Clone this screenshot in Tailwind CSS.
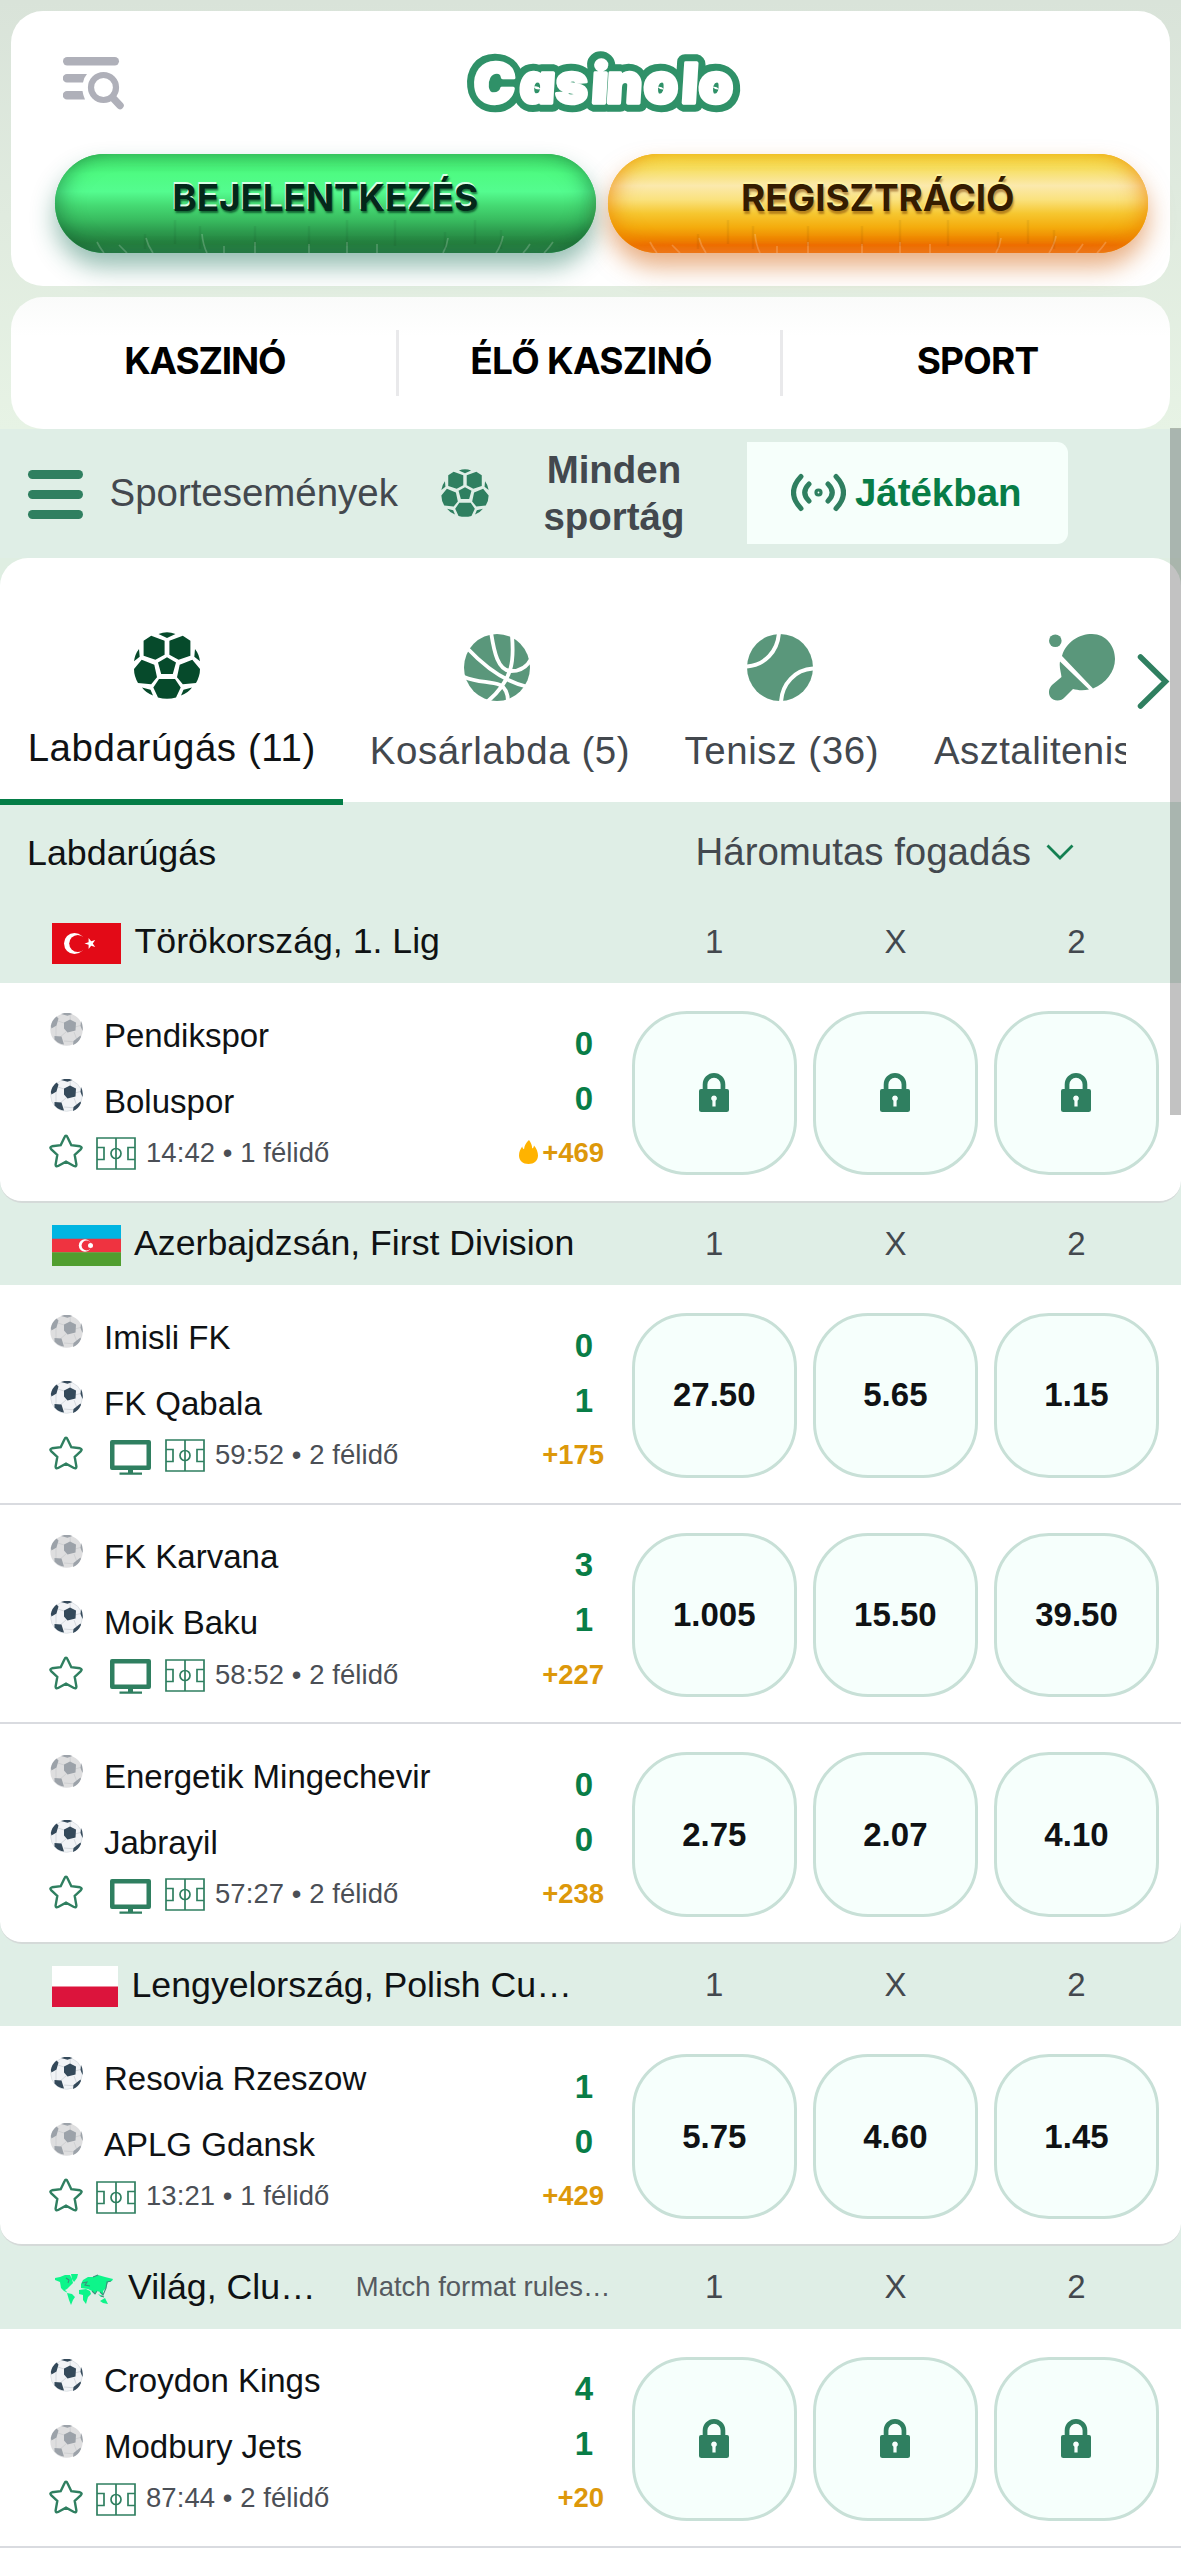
<!DOCTYPE html>
<html lang="hu">
<head>
<meta charset="utf-8">
<title>Casinolo</title>
<script src="https://cdn.jsdelivr.net/npm/@tailwindcss/browser@4"></script>
</head>
<body class="h-[2560px] overflow-hidden bg-[#e6f1e4] font-['Liberation_Sans',Arial,sans-serif] text-[#0f1214]">

<!-- shared icons -->
<svg class="hidden">
  <symbol id="soccer" viewBox="0 0 66 67">
    <path d="M24.5 2Q33-1.5 41.5 2L33 6ZM17.2 3.7 30.6 8.7V22.7L21.4 27.7 9.6 23.7V8.7ZM48.8 3.7 35.4 8.7V22.7L44.6 27.7 56.4 23.7V8.7ZM33 25.3 42 30.5 38.8 42H27.2L24 30.5ZM7.7 27.7 20.3 32.7 23 45.3 17.2 52.3 4 51Q0 44 0 37ZM58.3 27.7 45.7 32.7 43 45.3 48.8 52.3 62 51Q66 44 66 37ZM25 47H41L46.7 55.5 42 65.6Q33 68 24 65.6L19.3 55.5ZM5 17 5.7 24.7 0 29.3Q1 22 5 17ZM61 17 60.3 24.7 66 29.3Q65 22 61 17ZM8 55.5 16.5 57.7 19 63.6Q12 61 8 55.5ZM58 55.5 49.5 57.7 47 63.6Q54 61 58 55.5Z" fill="currentColor"/>
  </symbol>
  <symbol id="ball-on" viewBox="0 0 33 33">
    <circle cx="16.5" cy="16.5" r="15.8" fill="#f1f3f6" stroke="#dfe3e7"/>
    <path d="M20.5 12.5 20 0M20 12 8 8M25 14l7-2M16 19l-7 6M24 19l3 8M14 28l12 1M6 12l0 14" stroke="#d5d9de" fill="none"/>
    <path d="M14 9.5 20 6.5 26 9.5 25.500 17.500 17.5 19.500 14 15.500ZM.8 13Q2 7 6.500 3.500L8.500 5.500 6.500 12.500 1.500 15.500ZM4.500 23 11.500 23.500 14 31.500Q8.500 31 4.500 26.500ZM30.500 22.500 31 24Q28.500 30 23 32L23.500 28ZM31 8Q33.500 12.500 32.500 18L30.500 13ZM11 1Q17-1.500 22.500 1L17.500 2.800Z" fill="#34495a"/>
  </symbol>
  <symbol id="ball-off" viewBox="0 0 33 33">
    <circle cx="16.5" cy="16.5" r="16.2" fill="#dededf"/>
    <path d="M20.5 12.500 20 0M20 12 8 8M25 14l7-2M16 19l-7 6M24 19l3 8M14 28l12 1M6 12l0 14" stroke="#cfd0d2" fill="none"/>
    <path d="M14 9.5 20 6.5 26 9.5 25.500 17.500 17.5 19.500 14 15.500ZM.8 13Q2 7 6.500 3.500L8.500 5.500 6.500 12.500 1.500 15.500ZM4.500 23 11.500 23.500 14 31.500Q8.500 31 4.500 26.500ZM30.500 22.500 31 24Q28.500 30 23 32L23.500 28ZM31 8Q33.500 12.500 32.500 18L30.500 13ZM11 1Q17-1.500 22.500 1L17.500 2.800Z" fill="#9ca2a9"/>
  </symbol>
  <symbol id="star" viewBox="0 0 34 34">
    <path d="M17 1.800Q17.900 1.800 18.500 3.200L22.300 11.200 31 12.300Q33.600 13 31.900 15.100L25.700 21 27.400 30.500Q27.400 33 24.900 32L17 27.700 9.100 32Q6.600 33 6.600 30.500L8.300 21 2.100 15.100Q.4 13 3 12.300L11.700 11.200 15.500 3.200Q16.100 1.800 17 1.800Z" fill="none" stroke="#2f7f60" stroke-width="2.400"/>
  </symbol>
  <symbol id="field" viewBox="0 0 40 33">
    <path d="M1 1H39V32H1ZM20 1V32M1 10.500H8V22.500H1M39 10.500H32V22.500H39" fill="none" stroke="#2f7f60" stroke-width="1.700"/>
    <circle cx="20" cy="16.500" r="5" fill="none" stroke="#2f7f60" stroke-width="1.700"/>
  </symbol>
  <symbol id="tv" viewBox="0 0 41 35">
    <path d="M2 0H39Q41 0 41 2V28Q41 30 39 30H23V32.500H32V34.800H9.500V32.500H18V30H2Q0 30 0 28V2Q0 0 2 0ZM4.500 4.500V25.500H36.500V4.500Z" fill="#2f7f60" fill-rule="evenodd"/>
  </symbol>
  <symbol id="lock" viewBox="0 0 30 39">
    <path d="M3.700 16V11.500A11.300 11.500 0 0 1 26.300 11.500V16H28Q30 16 30 18V36.500Q30 39 27.500 39H2.500Q0 39 0 36.500V18Q0 16 2 16ZM8.400 16H21.600V11.500A6.600 6.800 0 0 0 8.400 11.500ZM15 22.500A2.900 2.900 0 0 0 13.400 27.800V33.500H16.600V27.800A2.900 2.900 0 0 0 15 22.500Z" fill="#2f7f60" fill-rule="evenodd"/>
  </symbol>
  <symbol id="flame" viewBox="0 0 19 24">
    <path d="M10 0C12 3 13 5 13.200 8.500 14.300 8 14.800 7 15 5.500 17.500 8.500 19 12 19 15.500 19 20.500 15 24 9.500 24S0 20.500 0 15.500C0 11.500 1.500 9 3.200 6.500 3.500 8 4 8.700 5 9.200 5.500 5.500 7 2.500 10 0Z" fill="#ffb300"/>
  </symbol>
  <symbol id="creases" viewBox="0 0 540 99" preserveAspectRatio="none">
    <path d="M42 88Q45 94 49 99M64 91Q68 95 72 99M91 84Q93 92 98 99M147 80Q148 91 152 99M169 92V99M200 88V99M254 90V99M292 88V99M322 90V99M393 84Q392 92 388 99M448 82Q446 92 441 99M475 90Q472 95 468 99M498 88Q494 94 489 99" fill="none" stroke="#fff" stroke-opacity=".2" stroke-width="1.700"/>
    <path d="M90 80V95M145 72V95M390 78V95M446 76V95M200 72V92M254 72V92M292 66V92M340 66V92M120 66V90M420 66V90" fill="none" stroke="#000" stroke-opacity=".05" stroke-width="2.500"/>
  </symbol>
</svg>

<!-- top area -->
<header class="flex h-[428.500px] flex-col gap-[11.500px] bg-linear-to-b from-[#d9e3d9] to-[#e7f3e5] px-[11px] pt-[11px]">
  <div class="flex h-[274.500px] flex-col rounded-[32px] bg-white">
    <div class="flex h-[143px] items-start">
      <svg class="mt-[46px] ml-[52px] h-[53px] w-[61px] shrink-0" viewBox="0 0 61 53">
        <g fill="#afb0b9">
          <rect width="56" height="8.500" rx="4.200"/>
          <path d="M4 17H24Q20.500 21 20 25.500H4A4.200 4.200 0 0 1 4 17ZM4 34H19.500Q20 38 22 42.500H4A4.200 4.200 0 0 1 4 34Z"/>
        </g>
        <circle cx="40.500" cy="30.500" r="12.500" fill="none" stroke="#afb0b9" stroke-width="6.200"/>
        <path d="M49.500 40.500 57 48.500" stroke="#afb0b9" stroke-width="7.500" stroke-linecap="round"/>
      </svg>
      <svg class="mt-[37px] ml-[338px] h-[70px] w-[284px]" viewBox="462 48 284 70">
        <g font-family="Inter, sans-serif" font-weight="900" font-style="italic" font-size="55" stroke-linejoin="round" transform="translate(-6.500 1) skewX(6)">
          <text x="471 517 553 589 604 641 679 696" y="102.500" fill="#2f9168" stroke="#2f9168" stroke-width="17.500">Casinolo</text>
          <text x="471 517 553 589 604 641 679 696" y="102.500" fill="#fff" stroke="#fff" stroke-width="3.500">Casinolo</text>
        </g>
      </svg>
    </div>
    <div class="flex gap-[12px] pl-11 font-['Inter',sans-serif] text-[37px] leading-none font-bold tracking-[-0.150px]">
      <button class="relative flex h-[99px] w-[540.500px] items-center justify-center rounded-full bg-[#39bd60] shadow-[0_14px_24px_rgba(20,110,85,0.450)]">
        <span class="absolute inset-0 rounded-full bg-[linear-gradient(to_bottom,#3fda68_0%,#4efb82_20%,#54fc8f_38%,#45da73_52%,#39bd60_66%,#2d9c4e_78%,#25803f_90%,#2b804a_100%)] shadow-[inset_14px_0_22px_-10px_rgba(14,84,44,0.500),inset_-14px_0_22px_-10px_rgba(14,84,44,0.500)]"></span>
        <svg class="absolute inset-0 h-[99px] w-[540px]"><use href="#creases"/></svg>
        <span class="relative -top-[6px] text-[#03281a] [text-shadow:-1px_-2px_0_#d9ffe6,1px_2px_2px_rgba(3,60,30,0.700)]">BEJELENTKEZÉS</span>
      </button>
      <button class="relative flex h-[99px] w-[540.500px] items-center justify-center rounded-full bg-[#f5ab0a] shadow-[0_14px_24px_rgba(215,110,30,0.550)]">
        <span class="absolute inset-0 rounded-full bg-[linear-gradient(to_bottom,#f3d535_0%,#f7df62_15%,#fbe9ad_32%,#fae27e_46%,#f6c730_60%,#f4ac0d_74%,#ef8600_86%,#ee6d00_92%,#ee7420_100%)] shadow-[inset_14px_0_22px_-10px_rgba(236,130,0,0.700),inset_-14px_0_22px_-10px_rgba(236,130,0,0.700)]"></span>
        <svg class="absolute inset-0 h-[99px] w-[540px]"><use href="#creases"/></svg>
        <span class="relative -top-[6px] text-[#351c00] [text-shadow:0_-2px_1px_#fff3a0,1px_3px_2px_rgba(120,60,0,0.500)]">REGISZTRÁCIÓ</span>
      </button>
    </div>
  </div>
  <nav class="flex h-[131.500px] items-center rounded-[32px] bg-linear-to-b from-[#fafbfa] to-white to-30% font-['Inter',sans-serif] text-[37px] leading-none font-bold tracking-[-0.800px] text-black">
    <a class="w-[384.500px] pb-[5px] pl-[3px] text-center tracking-[-1.200px]">KASZINÓ</a>
    <span class="h-[66px] w-[3px] bg-[#e9e9eb]"></span>
    <a class="w-[381px] pb-[5px] pl-[4px] text-center tracking-[-0.700px]">ÉLŐ KASZINÓ</a>
    <span class="h-[66px] w-[3px] bg-[#e9e9eb]"></span>
    <a class="w-[387px] pb-[5px] pl-[3px] text-center">SPORT</a>
  </nav>
</header>

<!-- scroll thumb -->
<div class="absolute top-[428px] right-0 z-10 h-[687px] w-[11px] bg-black/24"></div>

<!-- sport toolbar -->
<div class="flex h-[129px] items-center bg-[#dfeee6] pl-[27.500px] text-[38.450px] leading-[47px] text-[#43484e]">
  <div class="flex w-[55px] flex-col gap-[11px] pt-[2px]">
    <span class="h-[9px] rounded-full bg-[#2f7f60]"></span>
    <span class="h-[9px] rounded-full bg-[#2f7f60]"></span>
    <span class="h-[9px] rounded-full bg-[#2f7f60]"></span>
  </div>
  <span class="-mt-[2px] ml-[27px]">Sportesemények</span>
  <svg class="ml-[43.500px] h-[48px] w-[48px] text-[#2f7f60]"><use href="#soccer"/></svg>
  <span class="ml-[40.500px] w-[168px] text-center font-bold">Minden sportág</span>
  <div class="ml-[49px] flex h-[101.500px] w-[321px] items-center rounded-r-[11px] bg-[#f6fffb] pl-[44px] font-bold text-[#087d47]">
    <svg class="mr-[9px] mb-[2px] h-[41px] w-[55px]" viewBox="0 -2 55 41" fill="none" stroke="#2f7f60" stroke-width="5" stroke-linecap="round">
      <path d="M10 2.500Q-5 18.500 10 34.500M45 2.500Q60 18.500 45 34.500M18 10Q9.500 18.500 18 27M37 10Q45.500 18.500 37 27"/>
      <circle cx="27.500" cy="18.500" r="1.600"/>
    </svg>
    <span class="-mt-[2px]">Játékban</span>
  </div>
</div>

<!-- sport tabs -->
<div class="bg-[#dfeee2]">
  <div class="flex h-[244.500px] items-start rounded-t-[28px] bg-white">
    <div class="flex h-full w-[1126px] overflow-hidden text-[38.450px] leading-[44px] tracking-[0.600px] text-[#43484e]">
      <div class="flex w-[343.500px] shrink-0 flex-col items-center pt-[74px] text-[#0f1214]">
        <svg class="mr-[9px] h-[67px] w-[66px] text-[#064a2b]"><use href="#soccer"/></svg>
        <span class="mt-[27px]">Labdarúgás (11)</span>
      </div>
      <div class="flex w-[313px] shrink-0 flex-col items-center pt-[76px]">
        <svg class="mr-[6px] h-[67px] w-[66px]" viewBox="0 0 66 67"><ellipse cx="33" cy="33.500" rx="33" ry="33.500" fill="#5a977b"/><path d="M27 -2C30 18 34 37 47 37 56 37 63 33 67 25M48 2C50 25 50 45 23 68M3 14C20 32 40 48 64 53M0 43C14 49 26 47 36 51 42 54 44 59 44 68" fill="none" stroke="#fff" stroke-width="3.800"/></svg>
        <span class="mt-[28px]">Kosárlabda (5)</span>
      </div>
      <div class="flex w-[250.500px] shrink-0 flex-col items-center pt-[76px]">
        <svg class="mr-[4px] h-[67px] w-[66px]" viewBox="0 0 66 67"><ellipse cx="33" cy="33.500" rx="33" ry="33.500" fill="#5a977b"/><path d="M32 -2C31 17 18 32 -2 32.500M68 34.500C48 35 34.500 50 34 69" fill="none" stroke="#fff" stroke-width="4"/></svg>
        <span class="mt-[28px]">Tenisz (36)</span>
      </div>
      <div class="flex w-[354px] shrink-0 flex-col pt-[76px] pl-[27px]">
        <svg class="ml-[115px] h-[67px] w-[66px]" viewBox="0 0 66 67" fill="#5a977b"><circle cx="6.300" cy="6.700" r="6.300"/><path d="M13 22C17 8 30 0 43 0 57 0 66 12 66 25 66 38 57 49 44 54.500ZM11 27.500 40 55.500C33 57 28 56 24 55L16 63C12 68 4 67.500 1 62.500-1 58.500 0 54 3 51L12.500 43C12 38 10 33 11 27.500Z"/></svg>
        <span class="mt-[28px] tracking-[0.400px] whitespace-nowrap">Asztalitenis</span>
      </div>
    </div>
    <svg class="mt-[95px] ml-[10px] h-[57px] w-[34px]" viewBox="0 0 34 57"><path d="M4.500 4 29.500 28.500 4.500 53" fill="none" stroke="#2f7f60" stroke-width="5.500" stroke-linecap="round"/></svg>
  </div>
  <div class="relative"><span class="absolute -top-[3px] left-0 h-[6px] w-[343px] bg-[#047d47]"></span></div>
</div>

<main id="list" class="h-[760px] bg-white">
  <div class="flex h-[98.500px] items-center bg-[#dfeee6] pl-[27px]">
    <h2 class="w-[668.500px] pt-[3px] text-[35.800px] leading-[44px]">Labdarúgás</h2>
    <div class="flex items-center gap-[15px] pt-[2px] text-[38.450px] leading-[44px] text-[#43484e]">Háromutas fogadás
      <svg class="h-[16px] w-[28px]" viewBox="0 0 28 16"><path d="M1.500 1.500 14 14 26.500 1.500" fill="none" stroke="#148052" stroke-width="2.800"/></svg>
    </div>
  </div>
</main>

<script>
const icon = (name, cls) => `<svg class="${cls}"><use href="#${name}"/></svg>`;

const flags = {
  tr: `<svg class="mt-[3px] mr-[13.500px] h-[41px] w-[69px] shrink-0" viewBox="0 0 69 41"><path fill="#e30a17" d="M0 0H69V41H0Z"/><circle cx="22.500" cy="20.500" r="10.500" fill="#fff"/><circle cx="25.800" cy="20.500" r="8.600" fill="#e30a17"/><path fill="#fff" d="M32.500 20.500 36.600 19.200 36.600 15 39.200 18.300 43.200 17.100 40.800 20.500 43.200 23.900 39.200 22.700 36.600 26 36.600 21.800Z"/></svg>`,
  az: `<svg class="mt-[3px] mr-[13px] h-[41px] w-[69px] shrink-0" viewBox="0 0 69 41"><path fill="#00b5e2" d="M0 0H69V14H0Z"/><path fill="#ef3340" d="M0 13.700H69V27.500H0Z"/><path fill="#509e2f" d="M0 27.300H69V41H0Z"/><circle cx="33" cy="20.500" r="6.200" fill="#fff"/><circle cx="34.700" cy="20.500" r="5.100" fill="#ef3340"/><circle cx="38.500" cy="20.500" r="2.500" fill="#fff"/></svg>`,
  pl: `<svg class="mt-[3px] mr-[13.500px] h-[41px] w-[66px] shrink-0" viewBox="0 0 66 41"><path fill="#fff" d="M0 0H66V21H0Z"/><path fill="#dc143c" d="M0 20.500H66V41H0Z"/></svg>`,
  world: `<svg class="ml-[3px] mr-[15px] mt-1 h-[31px] w-[58px] shrink-0" viewBox="0 0 58 31"><path d="M0 4 5 3 10 1 15 1 17 5 18 9 14 13 12 15 10 16 13 19 9 17 6 14 5 8 0 6ZM16 0 23 0 22 4 19 8 17 5ZM12 19 17 20 20 23 18 26 16 31 14 26ZM26 10 28 6 33 3 38 3 43 1 50 3 58 5 57 7 53 8 51 14 48 17 48 21 45 18 42 17 40 20 37 17 33 15 26 14ZM24 16 31 15 35 17 36 20 33 23 31 30 28 26 28 21 24 20ZM45 27 50 24 53 30 48 29ZM43 20 48 22 46 23Z" fill="#0df58a"/><path d="M11 4 14 6 13 9M27 9 32 8 30 11 35 12M43 1 38 3M45 18 48 21 51 14 52 8 56 7M37 17 40 20 42 17M46 22 49 23" fill="none" stroke="#3d8f7c" stroke-width="1.100"/></svg>`
};

const leagues = [
  { flag: 'tr', name: 'Törökország, 1. Lig', matches: [
    { a: 'Pendikspor', b: 'Boluspor', s: [0, 0], active: 2, time: '14:42 • 1 félidő', more: '+469', hot: true } ] },
  { flag: 'az', name: 'Azerbajdzsán, First Division', matches: [
    { a: 'Imisli FK', b: 'FK Qabala', s: [0, 1], active: 2, tv: true, time: '59:52 • 2 félidő', more: '+175', odds: ['27.50', '5.65', '1.15'] },
    { a: 'FK Karvana', b: 'Moik Baku', s: [3, 1], active: 2, tv: true, time: '58:52 • 2 félidő', more: '+227', odds: ['1.005', '15.50', '39.50'] },
    { a: 'Energetik Mingechevir', b: 'Jabrayil', s: [0, 0], active: 2, tv: true, time: '57:27 • 2 félidő', more: '+238', odds: ['2.75', '2.07', '4.10'] } ] },
  { flag: 'pl', name: 'Lengyelország, Polish Cu…', matches: [
    { a: 'Resovia Rzeszow', b: 'APLG Gdansk', s: [1, 0], active: 1, time: '13:21 • 1 félidő', more: '+429', odds: ['5.75', '4.60', '1.45'] } ] },
  { flag: 'world', name: 'Világ, Clu…', note: 'Match format rules…', open: true, matches: [
    { a: 'Croydon Kings', b: 'Modbury Jets', s: [4, 1], active: 1, time: '87:44 • 2 félidő', more: '+20' } ] }
];

const ball = on => icon(on ? 'ball-on' : 'ball-off', 'mt-[-11px] mr-[21px] size-[33px]');
const team = (name, on) => `<div class="flex h-[65.900px] items-center">${ball(on)}<span>${name}</span></div>`;

const match = (m, last) => `
  <article class="${last ? 'flex h-[219.700px] rounded-b-[22px] border-b-[2.500px] border-[#d5dad9] bg-white' : 'flex h-[219.700px] border-b-[2.500px] border-[#d9dbe0] bg-white'}">
    <div class="w-[632px] pt-[19.300px] pr-[28px] pl-[50px] text-[33px] leading-[55px]">
      <div class="flex justify-between">
        <div>${team(m.a, m.active === 1)}${team(m.b, m.active === 2)}</div>
        <div class="w-[40px] pt-[13.400px] text-center font-bold text-[#087d47]"><div>${m.s[0]}</div><div>${m.s[1]}</div></div>
      </div>
      <div class="flex h-[37px] items-center text-[27.465px] leading-none whitespace-nowrap text-[#4b4f56]">
        ${icon('star', 'mb-[3px] -ml-px size-[34px]')}
        ${m.tv ? icon('tv', 'mt-[5px] ml-[27px] h-[35px] w-[41px]') + icon('field', 'mt-[2px] ml-[14px] h-[33px] w-[40px]') : icon('field', 'mt-[2px] ml-[13px] h-[33px] w-[40px]')}
        <span class="ml-[10px] tracking-[0.080px]">${m.time}</span>
        <span class="ml-auto flex items-center gap-1 font-bold text-[#dd980a]">${m.hot ? icon('flame', 'h-[24px] w-[19px]') : ''}${m.more}</span>
      </div>
    </div>
    <div class="flex gap-[16.500px] pt-[28px] text-[33px] leading-none font-bold">
      ${[0, 1, 2].map(i => `<button class="flex size-[164.600px] items-center justify-center rounded-[55px] border-[3px] border-[#c8e0d7] bg-[#f6fffc] pb-px">${m.odds ? m.odds[i] : icon('lock', 'h-[39px] w-[30px]')}</button>`).join('')}
    </div>
  </article>`;

const league = l => `
  <section class="bg-[#dfeee6]">
    <div class="flex h-[82.400px] items-center">
      <div class="flex w-[632px] items-center pl-[52px] text-[35.700px] leading-[44px] whitespace-nowrap">
        ${flags[l.flag]}<span class="-mt-px">${l.name}</span>${l.note ? `<span class="ml-[40px] text-[27.465px] text-[#555a60]">${l.note}</span>` : ''}
      </div>
      <div class="flex gap-[16.500px] text-center text-[33px] leading-[44px] text-[#43484e]">
        <span class="w-[164.600px]">1</span><span class="w-[164.600px]">X</span><span class="w-[164.600px]">2</span>
      </div>
    </div>
    ${l.matches.map((m, i) => match(m, !l.open && i === l.matches.length - 1)).join('')}
  </section>`;

document.getElementById('list').insertAdjacentHTML('beforeend', leagues.map(league).join('') + '<div class="h-4 bg-white"></div>');
</script>
</body>
</html>
